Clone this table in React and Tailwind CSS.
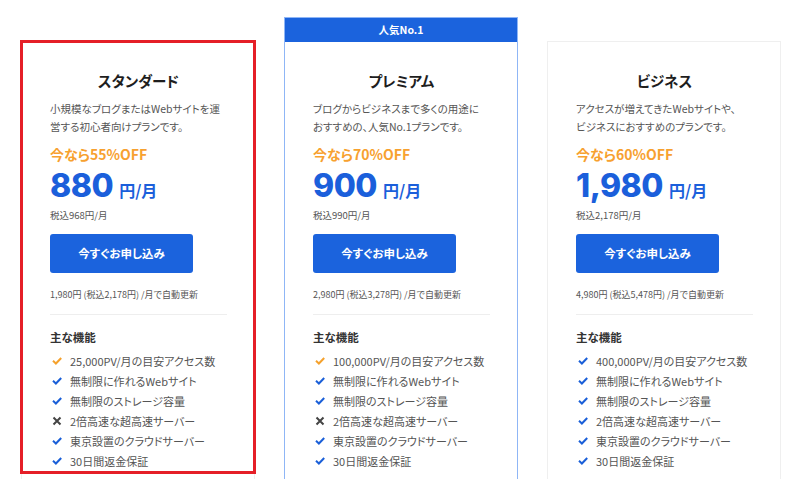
const plans = [
  {
    name: "スタンダード",
    desc: ["小規模なブログまたはWebサイトを運", "営する初心者向けプランです。"],
    off: "今なら55%OFF",
    price: "880",
    tax: "税込968円/月",
    renew: "1,980円 (税込2,178円) /月で自動更新",
    features: [
      ["orange", "25,000PV/月の目安アクセス数"],
      ["blue", "無制限に作れるWebサイト"],
      ["blue", "無制限のストレージ容量"],
      ["x", "2倍高速な超高速サーバー"],
      ["blue", "東京設置のクラウドサーバー"],
      ["blue", "30日間返金保証"],
    ],
  },
  {
    name: "プレミアム",
    popular: true,
    desc: ["ブログからビジネスまで多くの用途に", "おすすめの、人気No.1プランです。"],
    off: "今なら70%OFF",
    price: "900",
    tax: "税込990円/月",
    renew: "2,980円 (税込3,278円) /月で自動更新",
    features: [
      ["orange", "100,000PV/月の目安アクセス数"],
      ["blue", "無制限に作れるWebサイト"],
      ["blue", "無制限のストレージ容量"],
      ["x", "2倍高速な超高速サーバー"],
      ["blue", "東京設置のクラウドサーバー"],
      ["blue", "30日間返金保証"],
    ],
  },
  {
    name: "ビジネス",
    desc: ["アクセスが増えてきたWebサイトや、", "ビジネスにおすすめのプランです。"],
    off: "今なら60%OFF",
    price: "1,980",
    tax: "税込2,178円/月",
    renew: "4,980円 (税込5,478円) /月で自動更新",
    features: [
      ["blue", "400,000PV/月の目安アクセス数"],
      ["blue", "無制限に作れるWebサイト"],
      ["blue", "無制限のストレージ容量"],
      ["blue", "2倍高速な超高速サーバー"],
      ["blue", "東京設置のクラウドサーバー"],
      ["blue", "30日間返金保証"],
    ],
  },
];

// small check / cross marks for the feature list
const Mark = ({ type }) => {
  if (type === "x") {
    return (
      <svg width="10" height="10" viewBox="0 0 10 10" className="shrink-0">
        <path d="M1.5 1.5 L8.5 8.5 M8.5 1.5 L1.5 8.5" stroke="#444" strokeWidth="2" />
      </svg>
    );
  }
  return (
    <svg width="10" height="8" viewBox="0 0 10 8" className="shrink-0">
      <path
        d="M1 3.8 L3.9 6.5 L9.2 1"
        fill="none"
        stroke={type === "orange" ? "#f5a12c" : "#1a5fd8"}
        strokeWidth="2"
      />
    </svg>
  );
};

const PlanBody = ({ plan }) => (
  <div className="pl-[28px] pr-[27px] pt-[29px] pb-[40px]">
    <h2 className="text-center text-[14.5px] leading-[20px] font-bold text-[#1e1e1e]">{plan.name}</h2>
    <p className="mt-[9px] text-[10.5px] leading-[18px] text-[#555] whitespace-nowrap">
      {plan.desc[0]}
      <br />
      {plan.desc[1]}
    </p>
    <p className="mt-[8px] text-[14px] leading-[20px] font-bold text-[#f7a12f]">{plan.off}</p>
    <div className="mt-[2px] flex items-baseline text-[#1b5fdb] h-[40px]">
      <span className="font-['Inter',sans-serif] text-[32px] leading-[40px] font-extrabold tracking-[-0.5px]">
        {plan.price}
      </span>
      <span className="ml-[6px] text-[16px] font-bold">円/月</span>
    </div>
    <p className="mt-[2px] text-[9.5px] leading-[14px] text-[#555]">{plan.tax}</p>
    <button className="mt-[12px] w-[143px] h-[39px] rounded-[3px] bg-[#1b63dd] text-white text-[11.5px] font-bold">
      今すぐお申し込み
    </button>
    <p className="mt-[15px] text-[9px] leading-[14px] text-[#555] whitespace-nowrap">{plan.renew}</p>
    <div className="mt-[12px] h-px bg-[#eeeeee]" />
    <h3 className="mt-[13px] text-[11.5px] leading-[18px] font-bold text-[#333]">主な機能</h3>
    <ul className="mt-[5px]">
      {plan.features.map(([type, text]) => (
        <li key={text} className="flex items-center h-[20px] text-[11px] text-[#555] whitespace-nowrap">
          <span className="w-[10px] ml-[2px] mr-[8px] flex justify-center">
            <Mark type={type} />
          </span>
          {text}
        </li>
      ))}
    </ul>
  </div>
);

export default function App() {
  return (
    <div className="h-[479px] overflow-hidden bg-white font-['Noto_Sans_CJK_JP',sans-serif] [font-feature-settings:'palt']">
      <div className="flex items-start pl-[21px] gap-[29px]">
        {plans.map((plan) =>
          plan.popular ? (
            <div key={plan.name} className="w-[234px] mt-[17px] border border-[#8fb6f6] bg-white">
              <div className="h-[24px] bg-[#1b63dd] flex items-center justify-center text-white text-[10.5px] font-bold">
                人気No.1
              </div>
              <PlanBody plan={plan} />
            </div>
          ) : (
            <div key={plan.name} className="relative w-[234px] mt-[41px] border border-[#efefef] bg-white">
              <PlanBody plan={plan} />
              {plan.name === "スタンダード" && (
                <div className="absolute top-[-2px] left-[-2px] w-[236px] h-[434px] border-[3px] border-[#e51f28] pointer-events-none" />
              )}
            </div>
          )
        )}
      </div>
    </div>
  );
}
